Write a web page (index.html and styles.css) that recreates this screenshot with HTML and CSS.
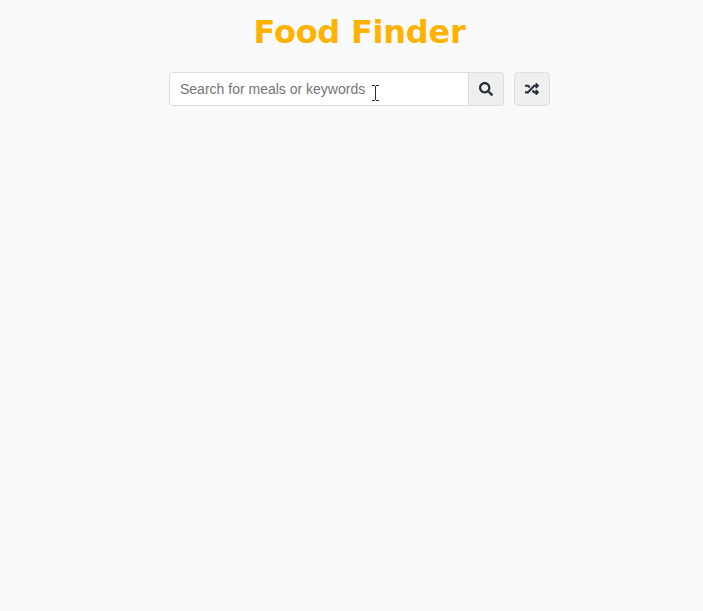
FILE: index.html
```html
<!DOCTYPE html>
<html lang="en">
<head>
<meta charset="utf-8">
<title>Food Finder</title>
<link rel="stylesheet" href="styles.css">
</head>
<body>
<main class="container">
<h1 class="title">Food Finder</h1>
<div class="controls">
<form class="search">
<input class="search-input" type="text" placeholder="Search for meals or keywords">
<button class="btn search-btn" type="button" aria-label="Search"><svg class="icon" viewBox="0 0 512 512"><path d="M505 442.7L405.3 343c-4.5-4.5-10.6-7-17-7H372c27.6-35.3 44-79.7 44-128C416 93.1 322.9 0 208 0S0 93.1 0 208s93.1 208 208 208c48.3 0 92.7-16.4 128-44v16.3c0 6.4 2.5 12.5 7 17l99.7 99.7c9.4 9.4 24.6 9.4 33.9 0l28.3-28.3c9.4-9.4 9.4-24.6.1-34zM208 336c-70.7 0-128-57.2-128-128 0-70.7 57.2-128 128-128 70.7 0 128 57.2 128 128 0 70.7-57.2 128-128 128z"/></svg></button>
</form>
<button class="btn random-btn" type="button" aria-label="Random meal"><svg class="icon" viewBox="0 0 512 512"><path d="M504.971 359.029c9.373 9.373 9.373 24.569 0 33.941l-80 79.984c-15.01 15.01-40.971 4.49-40.971-16.971V416h-58.785a12.004 12.004 0 0 1-8.773-3.812l-70.556-75.596 53.333-57.143L352 336h32v-39.981c0-21.438 25.943-31.998 40.971-16.971l80 79.981zM12 176h84l52.781 56.551 53.333-57.143-70.556-75.596A11.999 11.999 0 0 0 122.785 96H12c-6.627 0-12 5.373-12 12v56c0 6.627 5.373 12 12 12zm372 0v39.984c0 21.46 25.961 31.98 40.971 16.971l80-79.984c9.373-9.373 9.373-24.569 0-33.941l-80-79.981C409.943 24.021 384 34.582 384 56.019V96h-58.785a12.004 12.004 0 0 0-8.773 3.812L96 336H12c-6.627 0-12 5.373-12 12v56c0 6.627 5.373 12 12 12h110.785c3.326 0 6.503-1.381 8.773-3.812L352 176h32z"/></svg></button>
</div>
</main>
<svg class="cursor" viewBox="0 0 9 16" shape-rendering="crispEdges"><path d="M1 .5H4M5 .5H8M4.500 1V15M1 15.500H4M5 15.500H8"/></svg>
</body>
</html>
```
FILE: styles.css
```css
* { box-sizing: border-box; }
body {
  margin: 0;
  min-height: 100vh;
  background: #f8fafc;
  color: #2d3142;
  font-family: "DejaVu Sans", Verdana, sans-serif;
}
.container {
  display: flex;
  flex-direction: column;
  align-items: center;
  padding: 13px 0 0 16px;
}
.title {
  margin: 0 0 21px;
  color: #ffb300;
  font-size: 32px;
  letter-spacing: -0.25px;
  line-height: 38px;
}
.controls { display: flex; gap: 10px; }
.search { display: flex; margin: 0; }
.search-input {
  width: 300px;
  height: 34px;
  margin: 0;
  padding: 0 10px;
  border: 1px solid #dedede;
  border-radius: 4px 0 0 4px;
  background: #fff;
  font: 14px "Liberation Sans", Arial, sans-serif;
}
.search-input::placeholder { color: #757575; }
.btn {
  display: flex;
  align-items: center;
  justify-content: center;
  width: 36px;
  height: 34px;
  margin: 0;
  padding: 0;
  border: 1px solid #dedede;
  border-radius: 4px;
  background: #efefed;
  color: #252d3f;
}
.search-btn {
  width: 35px;
  border-left: 0;
  border-radius: 0 4px 4px 0;
}
.icon { width: 14px; height: 14px; fill: currentColor; }
.cursor {
  position: absolute;
  left: 371px;
  top: 85px;
  width: 9px;
  height: 16px;
  fill: none;
  stroke: #2b2b35;
}
```
